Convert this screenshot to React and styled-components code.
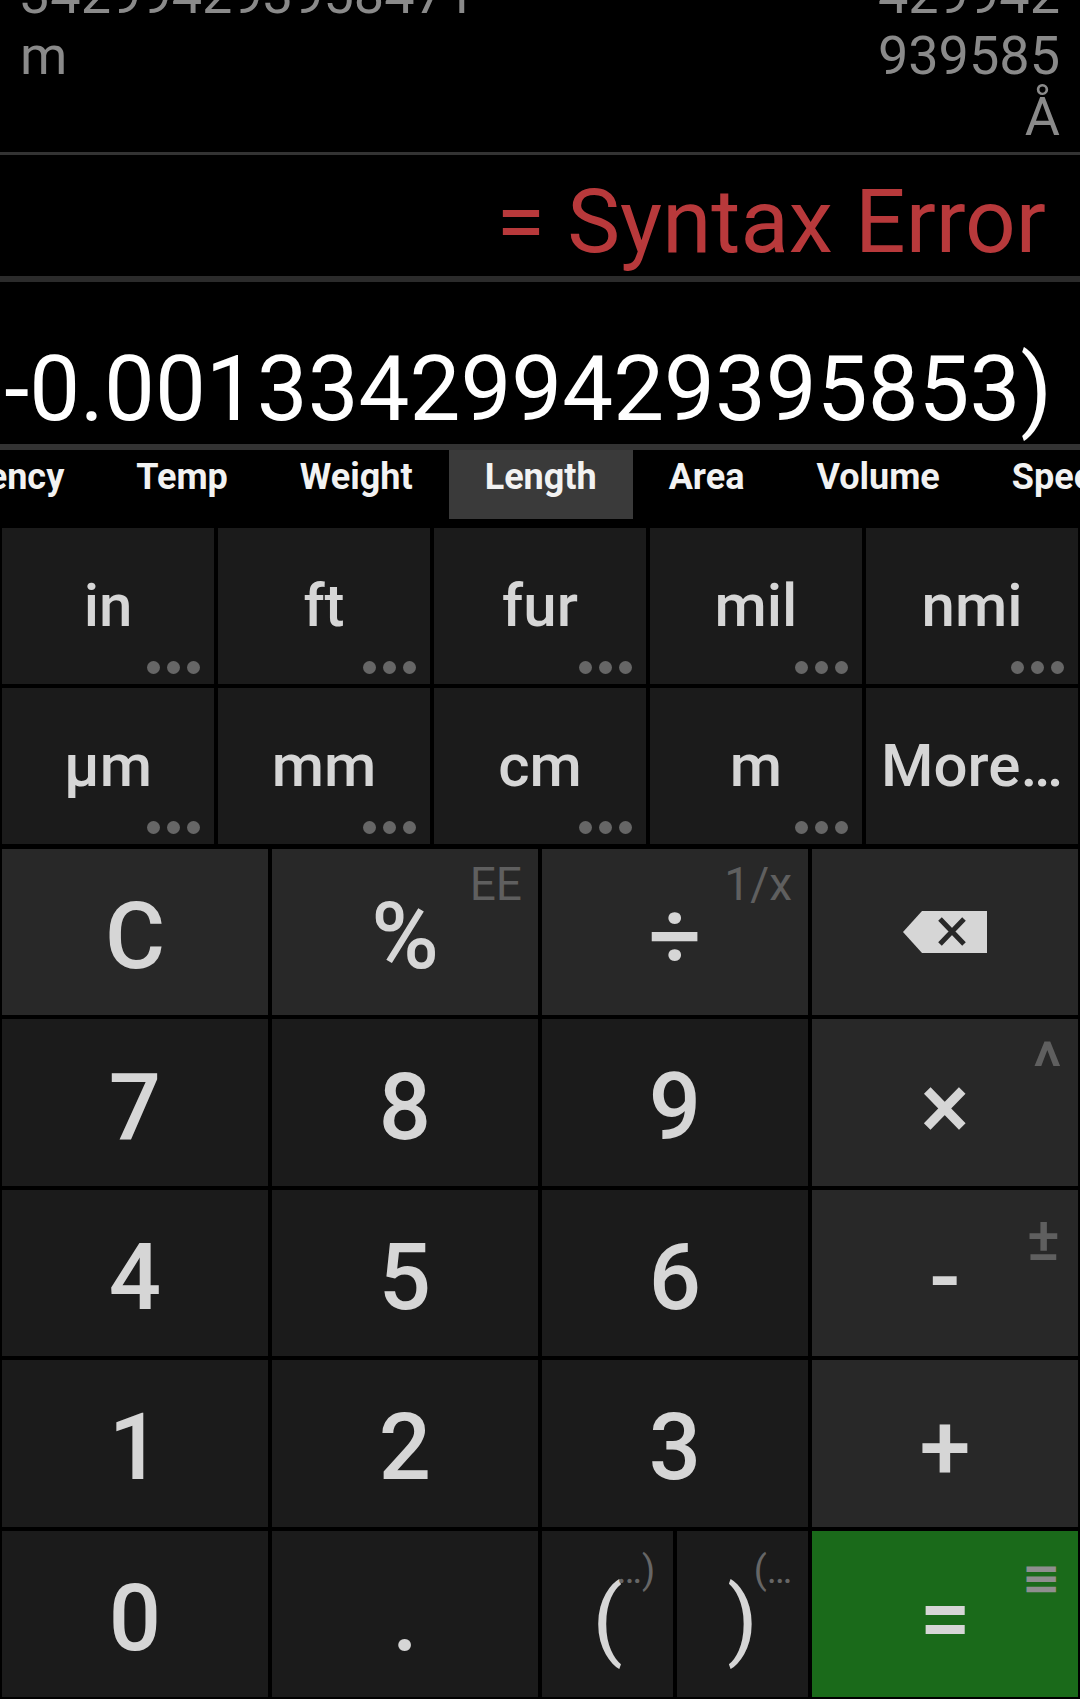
import React from 'react';
import styled, { createGlobalStyle } from 'styled-components';

const Global = createGlobalStyle`
  html, body { margin: 0; padding: 0; background: #000; }
  body { font-family: Roboto, "Noto Sans", "DejaVu Sans", sans-serif; }
  * { box-sizing: border-box; }
`;

const Screen = styled.div`
  width: 1080px;
  height: 1699px;
  background: #000;
  display: flex;
  flex-direction: column;
  overflow: hidden;
`;

const History = styled.div`
  height: 152px;
  flex: none;
  overflow: hidden;
  display: flex;
  flex-direction: column;
  justify-content: flex-end;
  padding: 0 20px 5px 20px;
`;

const HistoryEntry = styled.div`
  display: flex;
  justify-content: space-between;
  align-items: flex-start;
`;

const HistoryCol = styled.div`
  font-size: 54px;
  line-height: 61px;
  color: #8a8a8a;
  text-align: ${(p) => p.$align};
  white-space: pre;
`;

const Divider = styled.div`
  flex: none;
  height: ${(p) => p.$h}px;
  background: ${(p) => p.$c};
`;

const Result = styled.div`
  height: 121px;
  flex: none;
  display: flex;
  align-items: flex-end;
  justify-content: flex-end;
  padding: 0 34px 10px;
  font-size: 89px;
  line-height: 1;
  color: #b8393b;
  white-space: nowrap;
`;

const Expression = styled.div`
  height: 162px;
  flex: none;
  display: flex;
  align-items: flex-end;
  justify-content: flex-end;
  padding: 0 28px 9px 0;
  overflow: hidden;
  font-size: 90.6px;
  line-height: 1;
  color: #ffffff;
  white-space: nowrap;
`;

const TabBar = styled.div`
  height: 69px;
  flex: none;
  overflow: hidden;
  margin-bottom: 9px;
`;

const TabStrip = styled.div`
  display: flex;
  height: 100%;
  margin-left: -118px;
`;

const Tab = styled.div`
  flex: none;
  height: 100%;
  padding: 9px 36px 0;
  font-size: 36px;
  font-weight: 700;
  line-height: 1;
  color: #f2f2f2;
  white-space: nowrap;
  background: ${(p) => (p.$active ? '#3a3a3a' : 'transparent')};
`;

const UnitGrid = styled.div`
  flex: none;
  display: grid;
  grid-template-columns: repeat(5, 1fr);
  grid-template-rows: repeat(2, 156px);
  gap: 4px;
  padding: 0 2px;
  margin-bottom: 5px;
`;

const UnitKey = styled.div`
  position: relative;
  background: #1b1b1b;
  display: flex;
  align-items: center;
  justify-content: center;
  font-size: 60px;
  font-weight: 500;
  line-height: 1;
  color: #d6d6d6;
  white-space: nowrap;
`;

const Dots = styled.div`
  position: absolute;
  right: 14px;
  bottom: 10px;
  display: flex;
  gap: 7px;
`;

const Dot = styled.span`
  width: 13px;
  height: 13px;
  border-radius: 50%;
  background: #666;
`;

const Keypad = styled.div`
  flex: none;
  height: 848px;
  display: grid;
  grid-template-columns: repeat(4, 1fr);
  grid-template-rows: repeat(5, 1fr);
  gap: 4px;
  padding: 0 2px;
`;

const keyBg = { num: '#1b1b1b', op: '#282828', eq: '#1a6a1a' };

const Key = styled.div`
  position: relative;
  background: ${(p) => keyBg[p.$variant || 'num']};
  display: flex;
  align-items: center;
  justify-content: center;
  padding-top: ${(p) => (p.$flat ? 0 : 10)}px;
  font-size: 92px;
  font-weight: 500;
  line-height: 1;
  color: #d6d6d6;
`;

const Alt = styled.span`
  position: absolute;
  top: ${(p) => p.$top}px;
  right: ${(p) => p.$right ?? 16}px;
  font-size: ${(p) => p.$size ?? 46}px;
  font-weight: ${(p) => p.$weight ?? 400};
  line-height: 1;
  color: ${(p) => p.$color ?? '#5f5f5f'};
`;

const ParenPair = styled.div`
  display: grid;
  grid-template-columns: 1fr 1fr;
  gap: 4px;
`;

const ParenGlyph = styled.span`
  position: relative;
  font-size: 88px;
  font-weight: 400;
`;

const ParenSup = styled.span`
  position: absolute;
  left: 100%;
  top: -24px;
  margin-left: ${(p) => p.$shift}px;
  font-size: 38px;
  font-weight: 400;
  color: #666;
  white-space: nowrap;
`;

const tabs = ['Currency', 'Temp', 'Weight', 'Length', 'Area', 'Volume', 'Speed', 'Time'];
const units = [
  { label: 'in', more: true },
  { label: 'ft', more: true },
  { label: 'fur', more: true },
  { label: 'mil', more: true },
  { label: 'nmi', more: true },
  { label: 'µm', more: true },
  { label: 'mm', more: true },
  { label: 'cm', more: true },
  { label: 'm', more: true },
  { label: 'More…', more: false },
];

const BackspaceIcon = () => (
  <svg width="84" height="42" viewBox="0 0 84 42">
    <path d="M0 21 L19 0 H84 V42 H19 Z" fill="#d6d6d6" />
    <path d="M37 8 L61 33 M61 8 L37 33" stroke="#282828" strokeWidth="5" />
  </svg>
);

export default function App() {
  return (
    <Screen>
      <Global />
      <History>
        <HistoryEntry>
          <HistoryCol $align="left">{'0.00133\n342994293958471\nm'}</HistoryCol>
          <HistoryCol $align="right">{'0.0013342994293958\n429942\n939585\nÅ'}</HistoryCol>
        </HistoryEntry>
      </History>
      <Divider $h={3} $c="#333" />
      <Result>= Syntax Error</Result>
      <Divider $h={6} $c="#2b2b2b" />
      <Expression>-0.001334299429395853)</Expression>
      <Divider $h={6} $c="#333" />
      <TabBar>
        <TabStrip>
          {tabs.map((t) => (
            <Tab key={t} $active={t === 'Length'}>
              {t}
            </Tab>
          ))}
        </TabStrip>
      </TabBar>
      <UnitGrid>
        {units.map((u) => (
          <UnitKey key={u.label}>
            {u.label}
            {u.more && (
              <Dots>
                <Dot />
                <Dot />
                <Dot />
              </Dots>
            )}
          </UnitKey>
        ))}
      </UnitGrid>
      <Keypad>
        <Key $variant="op">C</Key>
        <Key $variant="op">
          %<Alt $top={12}>EE</Alt>
        </Key>
        <Key $variant="op">
          ÷<Alt $top={12}>1/x</Alt>
        </Key>
        <Key $variant="op" $flat>
          <BackspaceIcon />
        </Key>

        <Key>7</Key>
        <Key>8</Key>
        <Key>9</Key>
        <Key $variant="op">
          ×<Alt $top={14} $size={68} $weight={500} $right={16}>^</Alt>
        </Key>

        <Key>4</Key>
        <Key>5</Key>
        <Key>6</Key>
        <Key $variant="op">
          -<Alt $top={18} $size={62} $weight={500} $right={18}>±</Alt>
        </Key>

        <Key>1</Key>
        <Key>2</Key>
        <Key>3</Key>
        <Key $variant="op">+</Key>

        <Key>0</Key>
        <Key>.</Key>
        <ParenPair>
          <Key>
            <ParenGlyph>
              (<ParenSup $shift={-6}>…)</ParenSup>
            </ParenGlyph>
          </Key>
          <Key>
            <ParenGlyph>
              )<ParenSup $shift={-4}>(…</ParenSup>
            </ParenGlyph>
          </Key>
        </ParenPair>
        <Key $variant="eq">
          =<Alt $top={23} $size={47} $weight={700} $right={17} $color="#8f8f8f">≡</Alt>
        </Key>
      </Keypad>
    </Screen>
  );
}
